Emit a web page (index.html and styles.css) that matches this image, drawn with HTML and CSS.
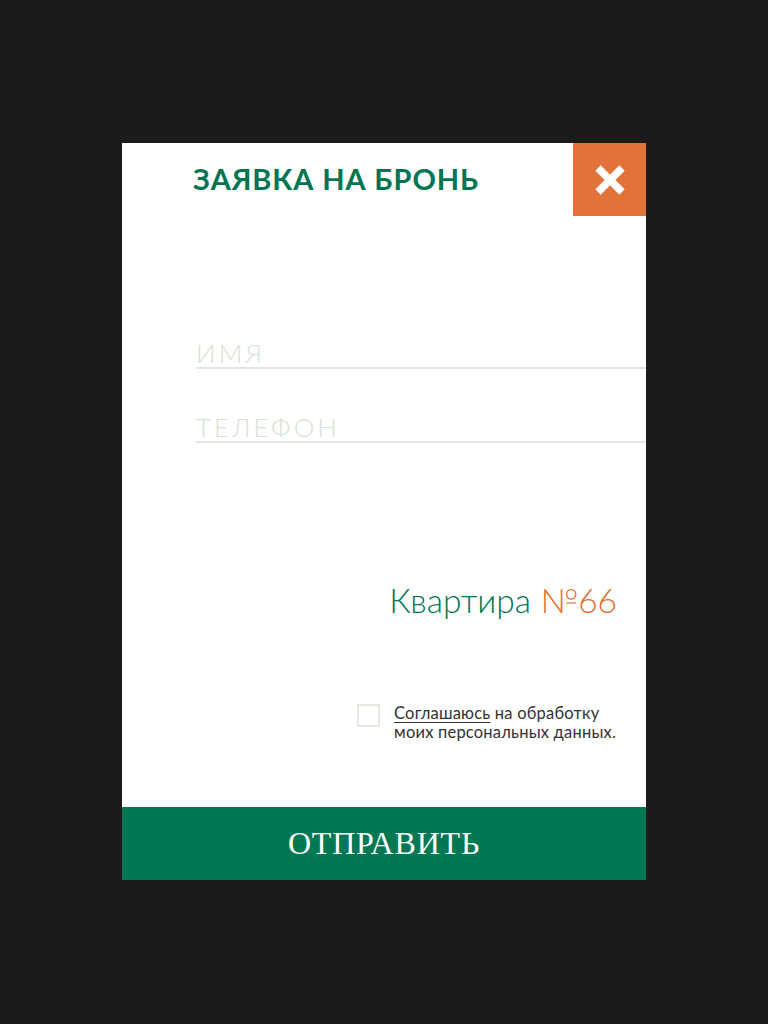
FILE: index.html
```html
<!DOCTYPE html>
<html lang="ru">
<head>
<meta charset="utf-8">
<title>Заявка на бронь</title>
<link rel="stylesheet" href="styles.css">
</head>
<body>
<div class="overlay">
  <form class="modal">
    <div class="modal-header">
      <h2 class="modal-title">ЗАЯВКА НА БРОНЬ</h2>
      <button type="button" class="close-btn" aria-label="Закрыть">
        <svg viewBox="0 0 32 32" width="32" height="32"><path d="M4 4 L28 28 M28 4 L4 28" stroke="#fff" stroke-width="7.5" stroke-linecap="butt"/></svg>
      </button>
    </div>
    <div class="modal-body">
      <div class="fields">
        <input class="field" type="text" placeholder="ИМЯ">
        <input class="field" type="tel" placeholder="ТЕЛЕФОН">
      </div>
      <div class="flat">Квартира <span class="flat-num">№66</span></div>
      <label class="consent">
        <span class="checkbox"></span>
        <span class="consent-text"><span class="consent-link">Соглашаюсь</span> на обработку<br>моих персональных данных.</span>
      </label>
    </div>
    <button type="button" class="submit-btn">ОТПРАВИТЬ</button>
  </form>
</div>
</body>
</html>
```
FILE: styles.css
```css
* { box-sizing: border-box; }
html, body { margin: 0; padding: 0; }
body {
  background: #1b1b1b;
  font-family: "Lato", "Noto Sans", sans-serif;
  width: 768px;
  height: 1024px;
}
.overlay {
  height: 1024px;
  display: flex;
  align-items: flex-start;
  justify-content: center;
  padding-top: 143px;
}
.modal {
  width: 524px;
  height: 737px;
  background: #fff;
  display: flex;
  flex-direction: column;
}
.modal-header {
  display: flex;
  justify-content: space-between;
  align-items: flex-start;
  height: 73px;
}
.modal-title {
  margin: 0;
  padding: 19px 0 0 71px;
  font-size: 29px;
  font-weight: 700;
  color: #007552;
  letter-spacing: 0.9px;
  line-height: 34px;
}
.close-btn {
  width: 73px;
  height: 73px;
  border: 0;
  padding: 0;
  background: #e1733a;
  display: flex;
  align-items: center;
  justify-content: center;
}
.close-btn svg { display: block; }
.modal-body {
  flex: 1;
  display: flex;
  flex-direction: column;
  align-items: flex-end;
  padding-top: 117px;
}
.fields {
  align-self: stretch;
  padding-left: 74px;
  display: flex;
  flex-direction: column;
  gap: 38px;
}
.field {
  display: block;
  width: 100%;
  height: 36px;
  padding: 6px 0 0;
  border: 0;
  border-bottom: 2px solid #dfe8dc;
  font-family: "Lato", "Noto Sans", sans-serif;
  font-weight: 300;
  font-size: 26px;
  letter-spacing: 3px;
  color: #555;
  outline: none;
  background: transparent;
}
.field::placeholder { color: #d6e3d3; opacity: 1; }
.flat {
  margin: 137px 29px 0 0;
  font-size: 33.5px;
  font-weight: 300;
  color: #007552;
  line-height: 40px;
}
.flat-num { color: #e0702f; }
.consent {
  margin: 84px 30px 0 0;
  display: flex;
  align-items: flex-start;
  gap: 14px;
}
.checkbox {
  width: 23px;
  height: 23px;
  border: 2px solid #e3ebe0;
  margin-top: 0;
}
.consent-text {
  font-size: 16.5px;
  letter-spacing: 0.2px;
  line-height: 19px;
  color: #333;
}
.consent-link {
  text-decoration: underline;
  text-underline-offset: 3px;
}
.submit-btn {
  height: 73px;
  border: 0;
  background: #007854;
  color: #fff;
  font-family: "Liberation Serif", "Times New Roman", serif;
  font-size: 32px;
  letter-spacing: 0.8px;
  padding: 0;
}
```
